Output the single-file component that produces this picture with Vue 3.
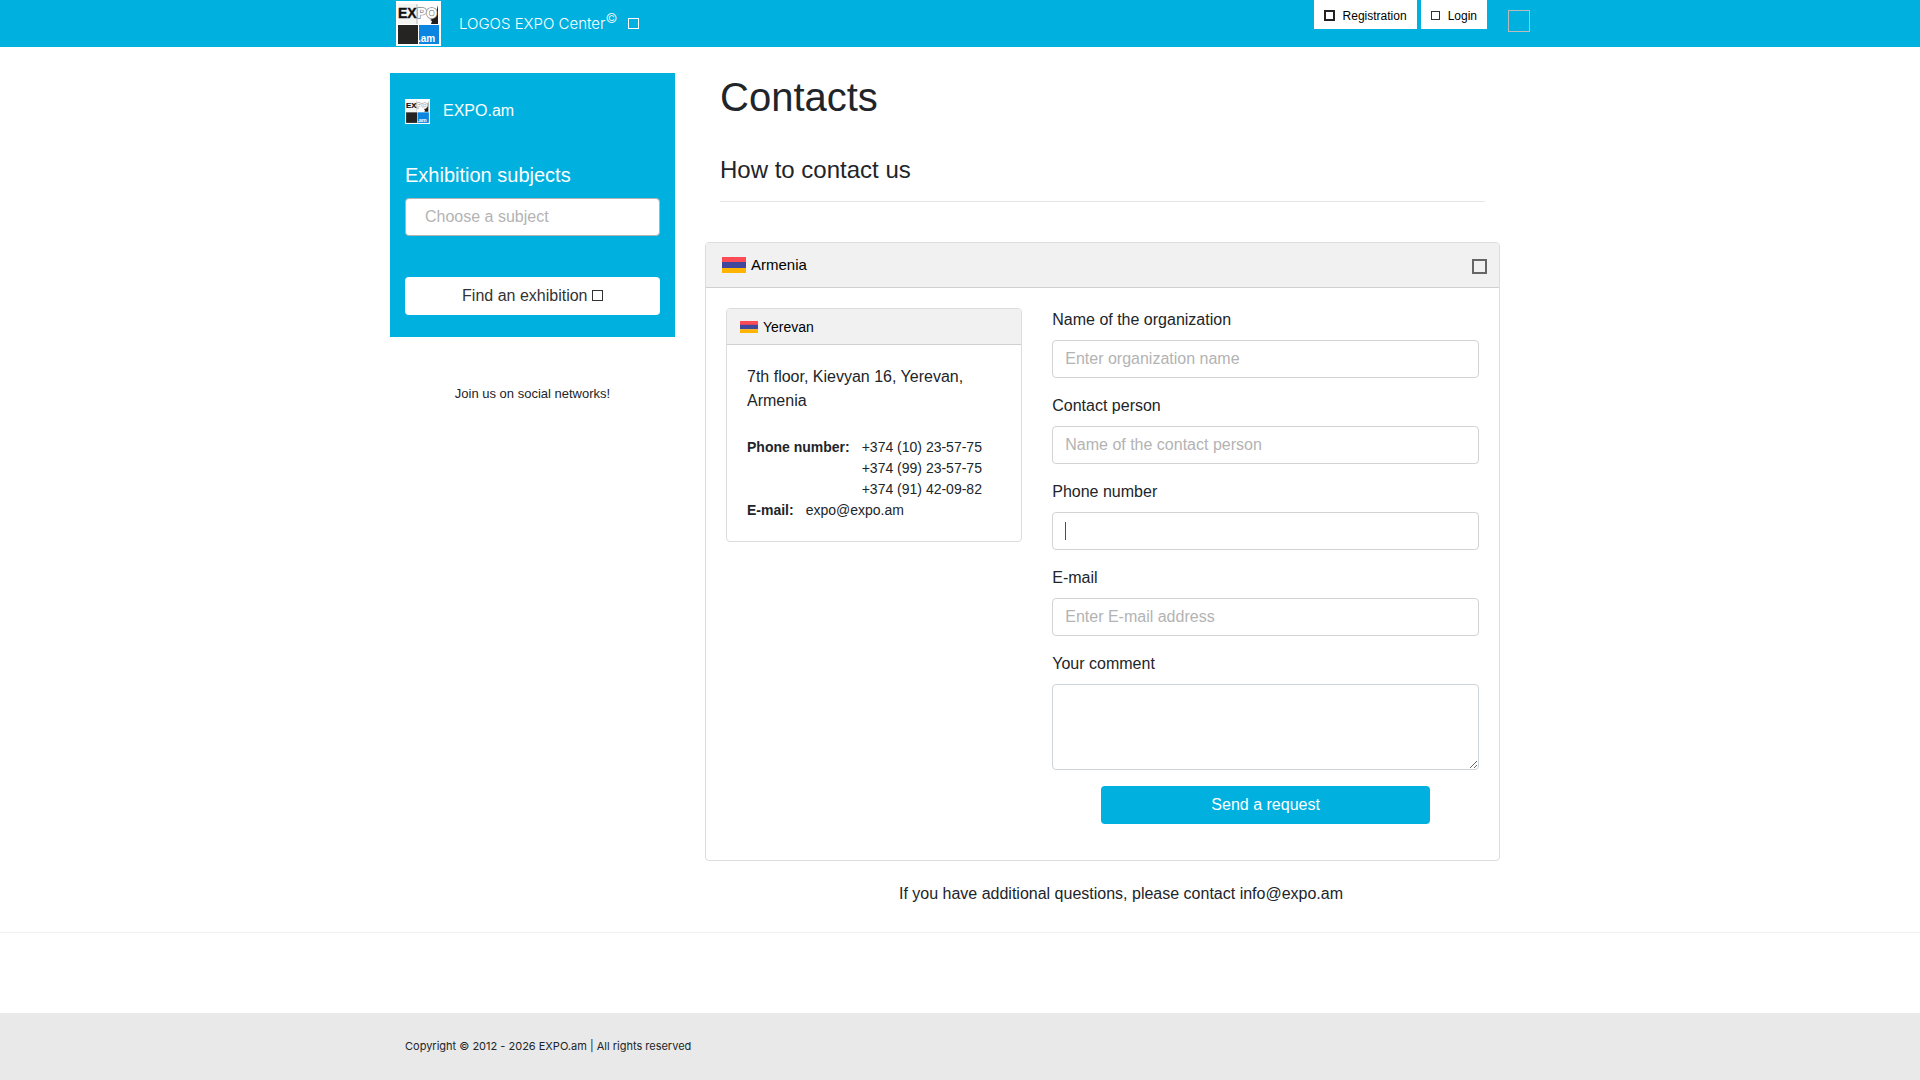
<script setup>
import { h, ref } from 'vue'

const subject = ref('')
const form = ref({ organization: '', person: '', phone: '', email: '', comment: '' })

const fields = [
  { id: 'organization', label: 'Name of the organization', type: 'text', placeholder: 'Enter organization name' },
  { id: 'person', label: 'Contact person', type: 'text', placeholder: 'Name of the contact person' },
  { id: 'phone', label: 'Phone number', type: 'tel', placeholder: '', active: true },
  { id: 'email', label: 'E-mail', type: 'email', placeholder: 'Enter E-mail address' },
]

const phones = ['+374 (10) 23-57-75', '+374 (99) 23-57-75', '+374 (91) 42-09-82']

const logoFont = { 'font-family': 'Liberation Sans, sans-serif', 'font-weight': 700 }

const ExpoLogo = () =>
  h('svg', { viewBox: '0 0 45 45', role: 'img', 'aria-label': 'EXPO.am' }, [
    h('rect', { width: 45, height: 45, fill: '#fff' }),
    h('rect', { x: 2, y: 3, width: 19, height: 20, fill: '#f4f4f2' }),
    h('rect', { x: 2, y: 24, width: 20, height: 19, fill: '#262422' }),
    h('rect', { x: 23, y: 24, width: 20, height: 19, fill: '#0a86e0' }),
    h('path', { d: 'M42 4v19h-7l1-3-2-1 4-2 2-5z', fill: '#1d1d1b' }),
    h('path', { d: 'M21 3v20', stroke: '#bbb', 'stroke-width': 1 }),
    h('text', { x: 2, y: 17, ...logoFont, 'font-size': 14, fill: '#111', stroke: '#111', 'stroke-width': 0.4 }, 'EX'),
    h('text', { x: 21, y: 17, ...logoFont, 'font-size': 14, fill: '#fff', stroke: '#888', 'stroke-width': 1.4, 'paint-order': 'stroke' }, 'PO'),
    h('text', { x: 22, y: 41, ...logoFont, 'font-size': 10, fill: '#fff' }, '.am'),
  ])

const ArmeniaFlag = () =>
  h('svg', { viewBox: '0 0 24 16', 'aria-hidden': 'true', preserveAspectRatio: 'none' }, [
    h('rect', { width: 24, height: 6, fill: '#ff4b55' }),
    h('rect', { y: 5, width: 24, height: 6, fill: '#41479b' }),
    h('rect', { y: 11, width: 24, height: 5, fill: '#ffb400' }),
  ])
</script>

<template>
  <div class="page">
    <header class="topbar">
      <div class="container topbar-row">
        <a class="brand" href="#">
          <ExpoLogo class="brand-logo" />
          <span class="brand-name">LOGOS EXPO Center<sup>©</sup></span>
          <i class="box box-light"></i>
        </a>
        <nav class="account">
          <a class="account-link" href="#"><i class="box box-dark"></i>Registration</a>
          <a class="account-link" href="#"><i class="box box-small"></i>Login</a>
          <button class="language" type="button" aria-label="Language"></button>
        </nav>
      </div>
    </header>

    <div class="container columns">
      <aside>
        <div class="panel">
          <a class="panel-brand" href="#"><ExpoLogo class="panel-logo" /><span>EXPO.am</span></a>
          <label class="panel-title" for="subject">Exhibition subjects</label>
          <input id="subject" v-model="subject" class="control subject" type="text" placeholder="Choose a subject" />
          <button class="button find" type="button">Find an exhibition <i class="box"></i></button>
        </div>
        <p class="social">Join us on social networks!</p>
      </aside>

      <main>
        <div class="headings">
          <h1>Contacts</h1>
          <h2>How to contact us</h2>
        </div>

        <section class="card">
          <div class="card-header">
            <ArmeniaFlag class="flag" />
            <span>Armenia</span>
            <button class="toggle" type="button" aria-label="Collapse"></button>
          </div>
          <div class="card-body">
            <section class="card office">
              <div class="card-header office-header">
                <ArmeniaFlag class="flag flag-small" />
                <span>Yerevan</span>
              </div>
              <div class="office-body">
                <address>7th floor, Kievyan 16, Yerevan, Armenia</address>
                <dl>
                  <div class="detail">
                    <dt>Phone number:</dt>
                    <dd><span v-for="p in phones" :key="p">{{ p }}</span></dd>
                  </div>
                  <div class="detail">
                    <dt>E-mail:</dt>
                    <dd>expo@expo.am</dd>
                  </div>
                </dl>
              </div>
            </section>

            <form class="request" @submit.prevent>
              <div v-for="f in fields" :key="f.id" class="field">
                <label :for="f.id">{{ f.label }}</label>
                <div class="control-wrap" :class="{ active: f.active }">
                  <input :id="f.id" v-model="form[f.id]" class="control" :type="f.type" :placeholder="f.placeholder" />
                </div>
              </div>
              <div class="field">
                <label for="comment">Your comment</label>
                <textarea id="comment" v-model="form.comment" class="control comment" rows="3"></textarea>
              </div>
              <button class="button send" type="submit">Send a request</button>
            </form>
          </div>
        </section>

        <p class="questions">If you have additional questions, please contact info@expo.am</p>
      </main>
    </div>

    <footer>
      <div class="container copyright">Copyright © 2012 - 2026 EXPO.am | All rights reserved</div>
    </footer>
  </div>
</template>

<style>
body {
  margin: 0;
  background: #fff;
}
</style>

<style scoped>
* {
  box-sizing: border-box;
}
.page {
  display: flex;
  flex-direction: column;
  min-height: 100vh;
  font: 16px/24px "Liberation Sans", Arial, sans-serif;
  color: #212529;
}
h1, h2, p, dl, dd {
  margin: 0;
  font-weight: 400;
}
a {
  color: inherit;
  text-decoration: none;
}
button, input, textarea {
  font: inherit;
}
.container {
  width: 100%;
  max-width: 1140px;
  margin: 0 auto;
}
.box {
  display: inline-block;
  flex: none;
  width: 11px;
  height: 11px;
  border: 1px solid currentColor;
}

.topbar {
  background: #00b1df;
}
.topbar-row {
  display: flex;
  justify-content: space-between;
  height: 47px;
}
.brand {
  display: flex;
  align-items: center;
  padding-left: 6px;
  color: #fff;
}
.brand-logo {
  width: 45px;
  height: 45px;
  margin-right: 18px;
}
.brand-name {
  font-family: Inter, sans-serif;
  font-size: 15px;
  font-weight: 300;
}
.brand-name sup {
  font-size: 13px;
  line-height: 0;
}
.box-light {
  margin-left: 11px;
}
.account {
  display: flex;
  align-items: flex-start;
  gap: 4px;
}
.account-link {
  display: flex;
  align-items: center;
  height: 29px;
  padding: 2px 10px 0;
  background: #fff;
  color: #000;
  font-size: 12px;
}
.box-dark {
  margin-right: 8px;
  border-width: 2px;
  border-color: #222;
}
.box-small {
  width: 9px;
  height: 9px;
  margin-right: 8px;
  border-color: #333;
}
.language {
  width: 22px;
  height: 22px;
  margin: 10px 0 0 17px;
  padding: 0;
  border: 1px solid #bbb;
  background: none;
}

.columns {
  display: grid;
  grid-template-columns: 1fr 3fr;
  padding-top: 26px;
}
.panel {
  display: flex;
  flex-direction: column;
  padding: 26px 15px 22px;
  background: #00b1df;
  color: #fff;
}
.panel-brand {
  display: flex;
  gap: 13px;
}
.panel-logo {
  width: 25px;
  height: 25px;
}
.panel-title {
  margin: 39px 0 11px;
  font-size: 20px;
}
.control {
  display: block;
  width: 100%;
  height: 38px;
  padding: 6px 12px;
  border: 1px solid #d3d3d3;
  border-radius: 4px;
  background: #fff;
  color: #495057;
  outline: none;
}
.control::placeholder {
  color: #b3b3b3;
  opacity: 1;
}
.subject {
  padding-left: 19px;
  border-color: #b3b3b3;
}
.button {
  height: 38px;
  border: 0;
  border-radius: 4px;
  cursor: pointer;
}
.find {
  margin-top: 41px;
  background: #fff;
  color: #333;
}
.social {
  margin-top: 45px;
  text-align: center;
  font-size: 13px;
}

main {
  padding: 0 30px;
}
.headings {
  margin: 0 15px 40px;
  padding-bottom: 16px;
  border-bottom: 1px solid #e5e5e5;
}
h1 {
  font-size: 40px;
  line-height: 48px;
}
h2 {
  margin-top: 34px;
  font-size: 24px;
  line-height: 30px;
}
.card {
  border: 1px solid #dcdcdc;
  border-radius: 4px;
}
.card-header {
  display: flex;
  align-items: center;
  gap: 5px;
  height: 45px;
  padding: 0 12px 0 16px;
  border-bottom: 1px solid #d0d0d0;
  border-radius: 3px 3px 0 0;
  background: #f1f1f1;
  color: #000;
  font-size: 15px;
}
.flag {
  width: 24px;
  height: 16px;
}
.toggle {
  width: 15px;
  height: 15px;
  margin: 2px 0 0 auto;
  padding: 0;
  border: 2px solid #666;
  background: none;
}
.card-body {
  display: grid;
  grid-template-columns: repeat(12, minmax(0, 1fr));
  column-gap: 30px;
  align-items: start;
  padding: 20px 20px 36px;
}
.office {
  grid-column: span 5;
}
.office-header {
  height: 36px;
  padding: 0 13px;
  font-size: 14px;
}
.flag-small {
  width: 18px;
  height: 12px;
}
.office-body {
  padding: 20px;
}
address {
  margin-bottom: 24px;
  font-style: normal;
}
dl {
  font-size: 14px;
  line-height: 21px;
}
.detail {
  display: flex;
  gap: 12px;
}
dt {
  font-weight: 700;
}
dd span {
  display: block;
}
.request {
  grid-column: span 7;
  display: flex;
  flex-direction: column;
}
.field {
  margin-bottom: 16px;
}
.field label {
  display: block;
  margin-bottom: 8px;
}
.control-wrap {
  position: relative;
}
/* text cursor of the field being edited */
.active::after {
  content: "";
  position: absolute;
  top: 10px;
  left: 13px;
  width: 1px;
  height: 18px;
  background: #495057;
}
.comment {
  height: 86px;
  border-color: #ced4da;
  resize: vertical;
}
.send {
  width: 77%;
  align-self: center;
  background: #00b1df;
  color: #fff;
}
.questions {
  margin: 21px 0 26px;
  padding-left: 37px;
  text-align: center;
}

footer {
  flex: 1;
  border-top: 1px solid #f1f1f1;
  background: linear-gradient(#fff 80px, #e9e9e9 80px);
}
.copyright {
  padding: 101px 15px 22px;
  font: 11px/24px Inter, sans-serif;
}
</style>
